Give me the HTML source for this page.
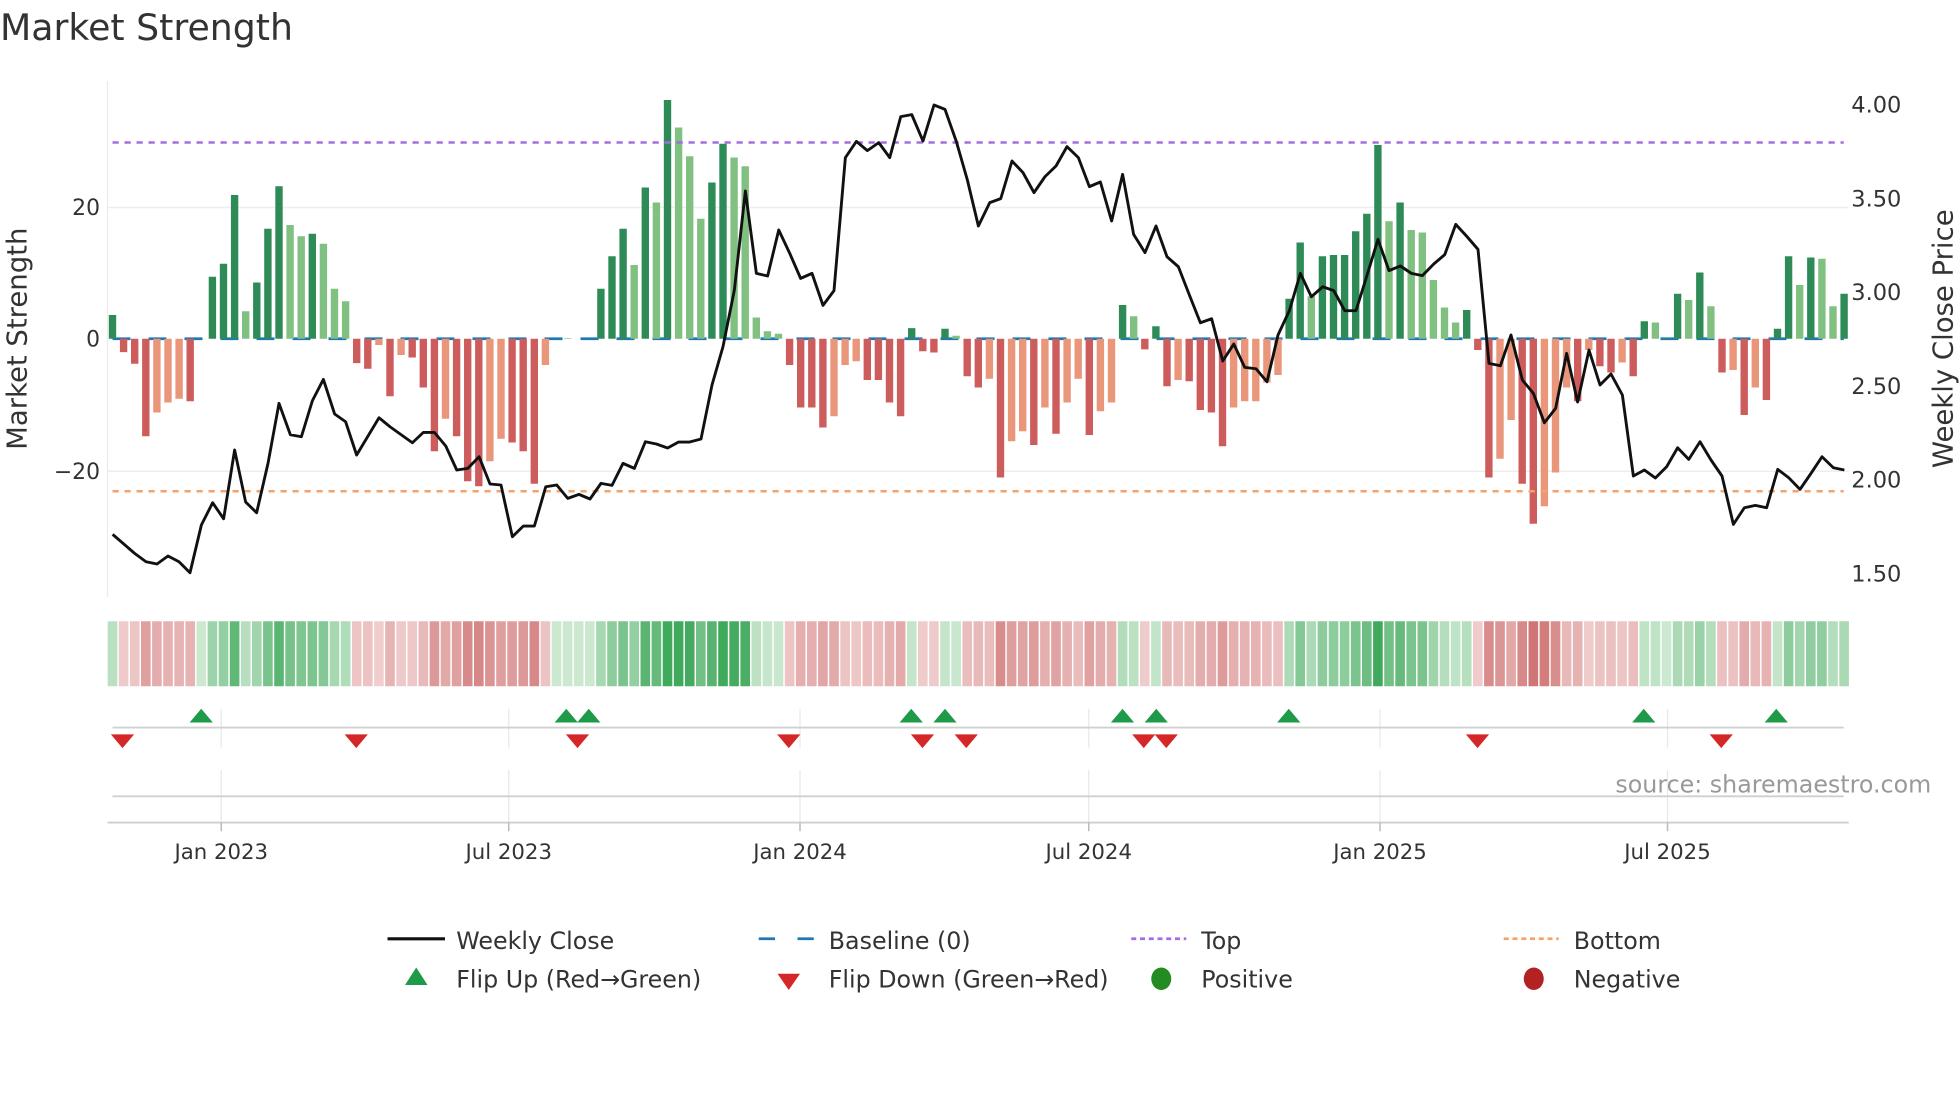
<!DOCTYPE html>
<html><head><meta charset="utf-8"><style>
html,body{margin:0;padding:0;background:#fff;}
svg{display:block;font-family:"DejaVu Sans","Liberation Sans",sans-serif;}
</style></head><body>
<svg id="s" xmlns="http://www.w3.org/2000/svg" width="1960" height="1102" viewBox="0 0 1568 881.6">
<rect width="1568" height="881.6" fill="#fff"/>
<text x="0" y="32" font-size="29" fill="#333">Market Strength</text>
<line x1="86" y1="65" x2="86" y2="478" stroke="#ececec" stroke-width="1"/>
<line x1="86" y1="166" x2="1479" y2="166" stroke="#eeeeee" stroke-width="1.2"/>
<line x1="86" y1="377" x2="1479" y2="377" stroke="#eeeeee" stroke-width="1.2"/>
<g font-size="17.5" fill="#333" text-anchor="end">
<text x="80" y="172">20</text><text x="80" y="277">0</text><text x="80" y="383">−20</text>
</g>
<g font-size="18" fill="#333">
<text x="1481" y="90">4.00</text><text x="1481" y="165">3.50</text><text x="1481" y="240">3.00</text>
<text x="1481" y="315">2.50</text><text x="1481" y="390">2.00</text><text x="1481" y="465">1.50</text>
</g>
<text transform="translate(21,271) rotate(-90)" font-size="22" fill="#333" text-anchor="middle">Market Strength</text>
<text transform="translate(1562,271) rotate(-90)" font-size="22" fill="#333" text-anchor="middle">Weekly Close Price</text>
<line x1="90" y1="271" x2="1475" y2="271" stroke="#1f77b4" stroke-width="2.2" stroke-dasharray="14.4 14.4"/>
<g id="bars"></g>
<line x1="90" y1="114" x2="1475" y2="114" stroke="#a46ee0" stroke-width="2" stroke-dasharray="5 4.6"/>
<line x1="90" y1="393" x2="1475" y2="393" stroke="#f0a56e" stroke-width="2" stroke-dasharray="5 4.6"/>
<polyline id="price" fill="none" stroke="#111" stroke-width="2.3" stroke-linejoin="round"/>
<g id="strip"></g>
<g stroke="#e8e8e8" stroke-width="1">
<line x1="177" y1="567" x2="177" y2="598"/><line x1="407" y1="567" x2="407" y2="598"/><line x1="640" y1="567" x2="640" y2="598"/>
<line x1="871" y1="567" x2="871" y2="598"/><line x1="1104" y1="567" x2="1104" y2="598"/><line x1="1334" y1="567" x2="1334" y2="598"/>
<line x1="177" y1="616" x2="177" y2="658"/><line x1="407" y1="616" x2="407" y2="658"/><line x1="640" y1="616" x2="640" y2="658"/>
<line x1="871" y1="616" x2="871" y2="658"/><line x1="1104" y1="616" x2="1104" y2="658"/><line x1="1334" y1="616" x2="1334" y2="658"/>
</g>
<line x1="90" y1="582" x2="1475" y2="582" stroke="#d0d0d0" stroke-width="1.5"/>
<line x1="90" y1="637" x2="1475" y2="637" stroke="#d0d0d0" stroke-width="1.5"/>
<line x1="86" y1="658" x2="1479" y2="658" stroke="#cfcfcf" stroke-width="1.5"/>
<g stroke="#bbb" stroke-width="1.2">
<line x1="177" y1="658" x2="177" y2="665"/><line x1="407" y1="658" x2="407" y2="665"/><line x1="640" y1="658" x2="640" y2="665"/>
<line x1="871" y1="658" x2="871" y2="665"/><line x1="1104" y1="658" x2="1104" y2="665"/><line x1="1334" y1="658" x2="1334" y2="665"/>
</g>
<g id="marks"></g>
<text x="1545" y="634" font-size="19" fill="#999" text-anchor="end">source: sharemaestro.com</text>
<g font-size="17" fill="#333" text-anchor="middle">
<text x="177" y="687">Jan 2023</text><text x="407" y="687">Jul 2023</text><text x="640" y="687">Jan 2024</text>
<text x="871" y="687">Jul 2024</text><text x="1104" y="687">Jan 2025</text><text x="1334" y="687">Jul 2025</text>
</g>
<g font-size="19" fill="#333">
<line x1="310" y1="751" x2="356" y2="751" stroke="#111" stroke-width="2.5"/>
<text x="365" y="759">Weekly Close</text>
<line x1="607" y1="751" x2="651" y2="751" stroke="#1f77b4" stroke-width="2.2" stroke-dasharray="13 18"/>
<text x="663" y="759">Baseline (0)</text>
<line x1="905" y1="751" x2="949" y2="751" stroke="#a46ee0" stroke-width="2.2" stroke-dasharray="4 3"/>
<text x="961" y="759">Top</text>
<line x1="1203" y1="751" x2="1247" y2="751" stroke="#f0a56e" stroke-width="2.2" stroke-dasharray="4 3"/>
<text x="1259" y="759">Bottom</text>
<polygon points="324,788 342,788 333,774" fill="#1e9a48"/>
<text x="365" y="790">Flip Up (Red→Green)</text>
<polygon points="622,779 640,779 631,792" fill="#d62728"/>
<text x="663" y="790">Flip Down (Green→Red)</text>
<ellipse cx="929" cy="783" rx="8" ry="9" fill="#228b22"/>
<text x="961" y="790">Positive</text>
<ellipse cx="1227" cy="783" rx="8" ry="9" fill="#b22222"/>
<text x="1259" y="790">Negative</text>
</g>
</svg>
<script>
var D="19d,-10.7d,-20d,-78d,-59l,-51l,-48l,-50d,0d,49.6d,60d,115d,22l,45d,88d,122d,91l,82l,84d,76l,40l,30l,-19.5d,-24d,-5l,-46d,-13l,-15d,-39d,-90d,-64l,-78d,-114d,-118d,-98l,-80l,-83d,-90d,-116d,-21l,0d,0.5l,0d,0d,40d,66d,88d,59l,121d,109l,191d,169l,146l,96l,125d,156d,145l,138l,17l,6l,4l,-21d,-55d,-55d,-71d,-62l,-21l,-18l,-33d,-33d,-51d,-62d,8.5d,-10d,-11d,8d,2.4l,-30d,-39d,-32l,-111d,-82l,-74l,-85d,-55l,-76d,-51l,-32l,-77d,-58l,-51l,27d,18l,-8.5d,10d,-38d,-33l,-34d,-57d,-59d,-86d,-55l,-50l,-50l,-35l,-29l,32d,77d,34l,66d,67d,67d,86d,100d,155d,94l,109d,87l,85l,47l,25l,13l,23d,-9d,-111d,-96l,-65l,-116d,-148d,-134l,-107l,-39l,-50d,-9l,-22d,-27d,-19l,-30d,14d,13l,1d,36d,31l,53d,26l,-27d,-25l,-61d,-39l,-49d,8d,66d,43l,65d,64l,26l,36d".split(",");
var NS="http://www.w3.org/2000/svg",bars=document.getElementById("bars"),strip=document.getElementById("strip");
function el(p,t,a){var e=document.createElementNS(NS,t);for(var k in a)e.setAttribute(k,a[k]);p.appendChild(e);return e;}
function lerp(a,b,t){return Math.round(a+(b-a)*t);}
D.forEach(function(s,k){
  var v=parseFloat(s),t=s.slice(-1),x=90+8.88*k;
  if(Math.abs(v)>0.3){
    var col=v>0?(t=="d"?"#2e8b57":"#80c080"):(t=="d"?"#cd5c5c":"#e9967a");
    el(bars,"rect",{x:x-2.95,y:v>0?271-v:271,width:5.9,height:Math.abs(v),fill:col});
  }
  var tt=Math.min(1,Math.abs(v)/150)*0.85+0.1,c;
  if(v>=0)c="rgb("+lerp(220,55,tt)+","+lerp(240,165,tt)+","+lerp(222,85,tt)+")";
  else c="rgb("+lerp(245,205,tt)+","+lerp(220,110,tt)+","+lerp(220,110,tt)+")";
  el(strip,"rect",{x:x-4.44+0.6,y:497,width:7.7,height:52,fill:c});
});
var P=[[90.1,427.5],[107.7,442.7],[116.8,449.4],[125.6,451.2],[134.4,444.8],[143.2,449.4],[152,458.2],[161.1,420],[170.1,402.2],[178.9,415],[187.7,360],[196.5,401.6],[205.3,410.2],[214.4,370.7],[223.2,322.7],[232.3,347.8],[241.1,349.4],[249.9,320.6],[258.7,303.5],[267.7,331.2],[276.5,337.4],[285.3,364],[303.2,334.2],[312,341.4],[329.9,354.2],[338.7,345.9],[347.5,345.9],[356.6,356.8],[365.4,376],[374.2,374.7],[383.3,365.4],[392,387.2],[400.8,388],[409.9,429.4],[418.7,420.8],[427.5,420.8],[436.6,389.4],[445.4,388],[454.2,398.7],[463.2,395.5],[472,399.2],[480.8,386.7],[489.6,388.3],[498.4,370.7],[507.5,374.7],[516.3,353.4],[525.1,355.2],[534.1,358.4],[542.9,353.6],[551.7,353.6],[560.8,351.2],[569.6,308],[578.4,277.3],[587.5,232],[596.3,152.8],[605.1,218.7],[614.1,220.8],[623,184],[631.8,202.7],[640.5,222.7],[649.6,218.7],[658.4,244.3],[667.2,232.5],[676.3,126.1],[685.1,113.1],[693.9,120.5],[703,114.1],[711.8,126.1],[720.6,93.3],[729.4,91.7],[738.4,112.8],[747.2,84],[756,87.5],[765.1,113.3],[773.9,144],[782.7,180.8],[791.8,162.1],[800.6,158.9],[809.6,128.8],[818.4,138.1],[827.2,154.1],[836,141.3],[844.8,132.8],[853.6,117.3],[862.7,126.1],[871.5,149.3],[880.3,145.6],[889.3,176.8],[898.1,139.5],[906.9,187.5],[916,202.1],[924.8,180.8],[933.6,205.4],[942.7,213.4],[951.5,236],[960.3,258.2],[969.3,255],[978.2,288.8],[987,275.2],[995.8,293.9],[1004.8,295],[1013.6,305.4],[1022.4,268],[1031.5,248.5],[1040.3,218.7],[1049.1,237.4],[1058.2,229.4],[1067,232.5],[1075.8,248.5],[1084.8,248.5],[1093.6,220.3],[1102.4,191.5],[1111.2,216.5],[1120.3,212.8],[1129.1,218.7],[1137.9,220.5],[1147,211.2],[1155.8,203.7],[1164.6,179.5],[1173.6,189.3],[1182.4,199.5],[1191.2,290.7],[1200.3,292.6],[1208.8,268],[1217.9,304],[1226.7,314.7],[1235.5,338.2],[1244.5,326.7],[1253.3,282.7],[1262.1,321.6],[1271.2,280],[1280,308],[1288.8,299.2],[1297.9,316],[1306.7,380.8],[1315.5,376],[1324.3,382.4],[1333.3,373.4],[1342.1,358.2],[1351,367.5],[1360,353.4],[1368.8,368],[1377.6,380.8],[1386.7,419.5],[1395.5,406.2],[1404.3,404.3],[1413.3,406.2],[1422.2,375.5],[1431,382.2],[1440,391.5],[1448.8,378.7],[1457.6,365.4],[1466.7,374.2],[1475.5,376]];
document.getElementById("price").setAttribute("points",P.map(function(p){return p.join(",");}).join(" "));
var marks=document.getElementById("marks");
[161,453,471,729,756,898,925,1031,1315,1421].forEach(function(x){el(marks,"polygon",{points:(x-9.3)+",578 "+(x+9.3)+",578 "+x+",567",fill:"#1e9a48"});});
[98,285,462,631,738,773,915,933,1182,1377].forEach(function(x){el(marks,"polygon",{points:(x-9.3)+",587.5 "+(x+9.3)+",587.5 "+x+",598.5",fill:"#d62728"});});
</script>
</body></html>
